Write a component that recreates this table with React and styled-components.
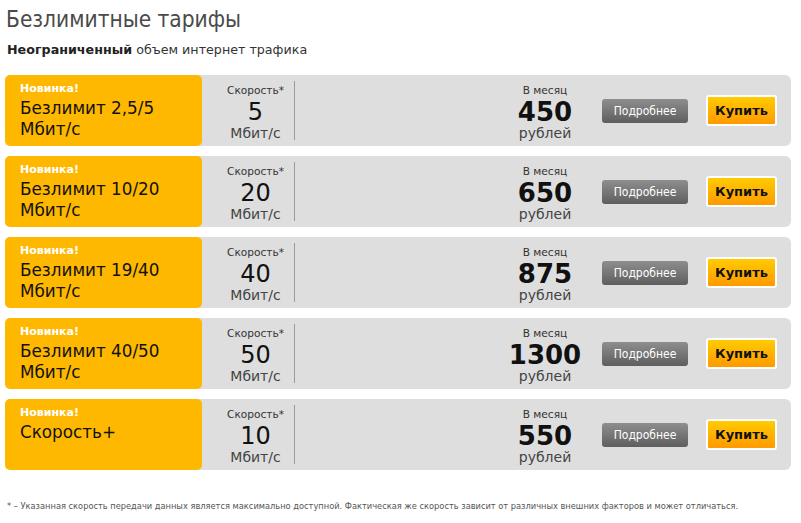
import React from 'react';
import styled, { createGlobalStyle } from 'styled-components';

const GlobalStyle = createGlobalStyle`
  body {
    margin: 0;
    background: #fff;
    font-family: "DejaVu Sans", Verdana, sans-serif;
  }
`;

const Page = styled.div`
  padding: 6px 10px 0 5px;
  width: 801px;
  box-sizing: border-box;
`;

const Title = styled.h1`
  font-family: "DejaVu Sans Condensed", "DejaVu Sans", sans-serif;
  font-size: 22.5px;
  font-weight: normal;
  color: #4a4a4a;
  margin: 0 0 0 1px;
  line-height: 26px;
`;

const Subtitle = styled.p`
  font-size: 12.7px;
  color: #333;
  margin: 10px 0 18px 2px;
  line-height: 15px;

  b {
    color: #222;
  }
`;

const List = styled.div`
  display: flex;
  flex-direction: column;
  gap: 10px;
  width: 786px;
`;

const Row = styled.div`
  display: flex;
  align-items: center;
  height: 71px;
  background: #dedede;
  border-radius: 6px;
`;

const NameBox = styled.div`
  width: 197px;
  height: 100%;
  box-sizing: border-box;
  background: #ffb800;
  border-radius: 5px;
  padding: 7px 0 0 15px;
`;

const Badge = styled.div`
  font-size: 11px;
  font-weight: bold;
  color: #fff;
  line-height: 14px;
  margin-bottom: 2px;
`;

const Name = styled.div`
  font-size: 16.8px;
  color: #111;
  line-height: 21px;
`;

const Column = styled.div`
  height: 59px;
  box-sizing: border-box;
  padding-top: 2px;
  display: flex;
  flex-direction: column;
  align-items: center;
  color: #333;
`;

const Speed = styled(Column)`
  margin-left: 15px;
  width: 78px;
  border-right: 1px solid #9a9a9a;
`;

const Price = styled(Column)`
  width: 80px;
`;

const Label = styled.div`
  font-size: 10.6px;
  line-height: 14px;
  color: #333;
`;

const Value = styled.div`
  font-size: ${(p) => (p.$bold ? 26 : 24)}px;
  font-weight: ${(p) => (p.$bold ? 'bold' : 'normal')};
  line-height: 26px;
  margin: 2px 0 1px;
  color: #111;
`;

const Unit = styled.div`
  font-size: 14px;
  line-height: 15px;
  color: #444;
  white-space: nowrap;
`;

const Spacer = styled.div`
  flex: 1;
`;

const MoreButton = styled.button`
  margin-left: 17px;
  width: 86px;
  height: 24px;
  border: none;
  border-radius: 3px;
  background: linear-gradient(#8e8e8e, #5e5e5e);
  color: #fff;
  font-family: "DejaVu Sans Condensed", "DejaVu Sans", sans-serif;
  font-size: 12px;
  padding: 0;
`;

const BuyButton = styled.button`
  margin-left: 18px;
  margin-right: 14px;
  width: 71px;
  height: 31px;
  border: 2px solid #fff;
  border-radius: 3px;
  background: linear-gradient(#ffcb00, #ff9a00);
  color: #111;
  font-family: "DejaVu Sans", sans-serif;
  font-size: 13px;
  font-weight: bold;
  padding: 0;
`;

const Footnote = styled.p`
  margin: 30px 0 0 2px;
  font-family: "DejaVu Sans Condensed", "DejaVu Sans", sans-serif;
  font-size: 9.2px;
  color: #555;
`;

const tariffs = [
  { name: ['Безлимит 2,5/5', 'Мбит/с'], speed: 5, price: 450 },
  { name: ['Безлимит 10/20', 'Мбит/с'], speed: 20, price: 650 },
  { name: ['Безлимит 19/40', 'Мбит/с'], speed: 40, price: 875 },
  { name: ['Безлимит 40/50', 'Мбит/с'], speed: 50, price: 1300 },
  { name: ['Скорость+'], speed: 10, price: 550 },
];

export default function App() {
  return (
    <Page>
      <GlobalStyle />
      <Title>Безлимитные тарифы</Title>
      <Subtitle>
        <b>Неограниченный</b> объем интернет трафика
      </Subtitle>
      <List>
        {tariffs.map((t, i) => (
          <Row key={i}>
            <NameBox>
              <Badge>Новинка!</Badge>
              {t.name.map((line) => (
                <Name key={line}>{line}</Name>
              ))}
            </NameBox>
            <Speed>
              <Label>Скорость*</Label>
              <Value>{t.speed}</Value>
              <Unit>Мбит/с</Unit>
            </Speed>
            <Spacer />
            <Price>
              <Label>В месяц</Label>
              <Value $bold>{t.price}</Value>
              <Unit>рублей</Unit>
            </Price>
            <MoreButton>Подробнее</MoreButton>
            <BuyButton>Купить</BuyButton>
          </Row>
        ))}
      </List>
      <Footnote>
        * – Указанная скорость передачи данных является максимально доступной. Фактическая же скорость зависит от различных внешних факторов и может отличаться.
      </Footnote>
    </Page>
  );
}
